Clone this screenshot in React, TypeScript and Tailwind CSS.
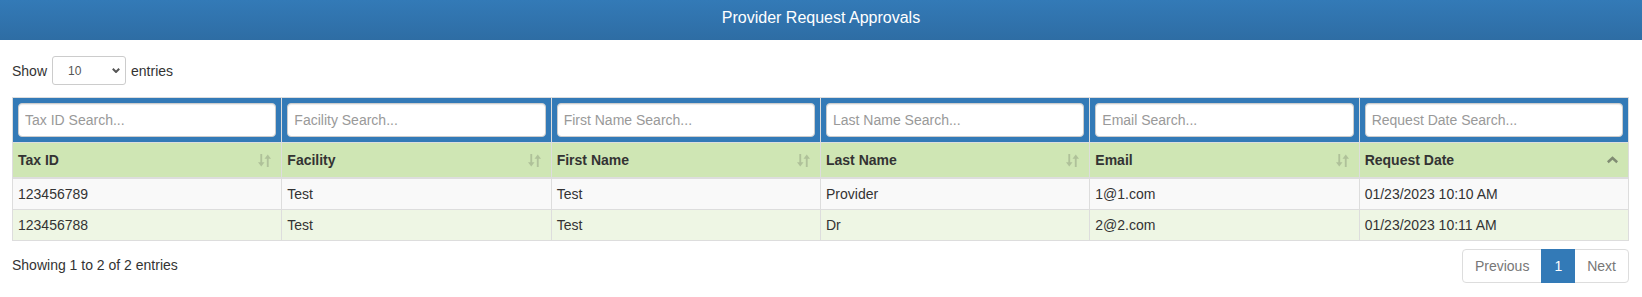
import type { ReactNode } from "react";

type Row = {
  taxId: string;
  facility: string;
  firstName: string;
  lastName: string;
  email: string;
  requestDate: string;
};

const columns = [
  { key: "taxId", label: "Tax ID", search: "Tax ID Search..." },
  { key: "facility", label: "Facility", search: "Facility Search..." },
  { key: "firstName", label: "First Name", search: "First Name Search..." },
  { key: "lastName", label: "Last Name", search: "Last Name Search..." },
  { key: "email", label: "Email", search: "Email Search..." },
  { key: "requestDate", label: "Request Date", search: "Request Date Search..." },
] as const;

const rows: Row[] = [
  {
    taxId: "123456789",
    facility: "Test",
    firstName: "Test",
    lastName: "Provider",
    email: "1@1.com",
    requestDate: "01/23/2023 10:10 AM",
  },
  {
    taxId: "123456788",
    facility: "Test",
    firstName: "Test",
    lastName: "Dr",
    email: "2@2.com",
    requestDate: "01/23/2023 10:11 AM",
  },
];

// unsorted column marker: down arrow + up arrow, faded
function SortIcon() {
  return (
    <svg width="13" height="13" viewBox="0 0 14 14" fill="currentColor" className="text-[#333] opacity-20" aria-hidden>
      <path d="M2.5 0h2v9H7L3.5 13.5 0 9h2.5z" />
      <path d="M11.5 14h-2V5H7l3.5-4.5L14 5h-2.5z" />
    </svg>
  );
}

function SortAscIcon() {
  return (
    <svg width="11" height="8" viewBox="0 0 12 8" fill="currentColor" className="text-[#333] opacity-50" aria-hidden>
      <path d="M6 0l6 5.5L10.2 7.5 6 3.6 1.8 7.5 0 5.5z" />
    </svg>
  );
}

function PageLink({ children, active, className }: { children: ReactNode; active?: boolean; className?: string }) {
  return (
    <span
      className={`-ml-px border px-3 py-[6px] leading-5 ${
        active ? "z-10 border-[#337ab7] bg-[#337ab7] text-white" : "border-[#ddd] bg-white text-[#777]"
      } ${className ?? ""}`}
    >
      {children}
    </span>
  );
}

export default function App() {
  return (
    <div className="min-h-screen bg-white text-[14px] leading-5 text-[#333] [font-family:'Liberation_Sans',Arial,sans-serif]">
      <header className="h-10 bg-gradient-to-b from-[#337ab7] to-[#2e6da4] pt-2 text-center text-[16px] leading-5 text-white">
        Provider Request Approvals
      </header>

      <main className="pl-3 pr-[13px] pt-4">
        <div className="flex items-center gap-[5px]">
          <span>Show</span>
          <div className="relative">
            <select
              defaultValue="10"
              className="h-[29px] w-[74px] appearance-none rounded-[3px] border border-[#ccc] bg-white pl-[15px] text-[12px] text-[#555] outline-none"
            >
              <option>10</option>
              <option>25</option>
              <option>50</option>
              <option>100</option>
            </select>
            <svg
              width="8"
              height="5"
              viewBox="0 0 8 5"
              className="pointer-events-none absolute right-[6px] top-[12px] text-[#555]"
              aria-hidden
            >
              <path d="M0.8 0.8L4 4 7.2 0.8" fill="none" stroke="currentColor" strokeWidth="2" />
            </svg>
          </div>
          <span>entries</span>
        </div>

        <table className="mt-3 w-full table-fixed border-collapse border border-[#ddd]">
          <thead>
            <tr className="bg-[#337ab7]">
              {columns.map((c) => (
                <th key={c.key} className="border border-[#ddd] p-[5px] font-normal">
                  <input
                    placeholder={c.search}
                    className="block h-[34px] w-full rounded border border-[#ccc] bg-white px-[6px] text-[14px] text-[#555] shadow-[inset_0_1px_1px_rgba(0,0,0,0.075)] outline-none placeholder:text-[#999]"
                  />
                </th>
              ))}
            </tr>
            <tr className="bg-[#cfe6b4]">
              {columns.map((c, i) => (
                <th key={c.key} className="border border-b-2 border-[#ddd] p-[5px] text-left font-bold">
                  <div className="flex h-[24px] items-center justify-between pr-[5px]">
                    <span>{c.label}</span>
                    {i === columns.length - 1 ? <SortAscIcon /> : <SortIcon />}
                  </div>
                </th>
              ))}
            </tr>
          </thead>
          <tbody>
            {rows.map((r, i) => (
              <tr key={r.taxId} className={i % 2 === 0 ? "bg-[#f9f9f9]" : "bg-[#eef6e4]"}>
                {columns.map((c) => (
                  <td key={c.key} className="border border-[#ddd] p-[5px]">
                    {r[c.key]}
                  </td>
                ))}
              </tr>
            ))}
          </tbody>
        </table>

        <div className="mt-2 flex items-start justify-between">
          <div className="pt-[6px]">Showing 1 to 2 of 2 entries</div>
          <div className="flex">
            <PageLink className="ml-0 rounded-l">Previous</PageLink>
            <PageLink active>1</PageLink>
            <PageLink className="rounded-r">Next</PageLink>
          </div>
        </div>
      </main>
    </div>
  );
}
